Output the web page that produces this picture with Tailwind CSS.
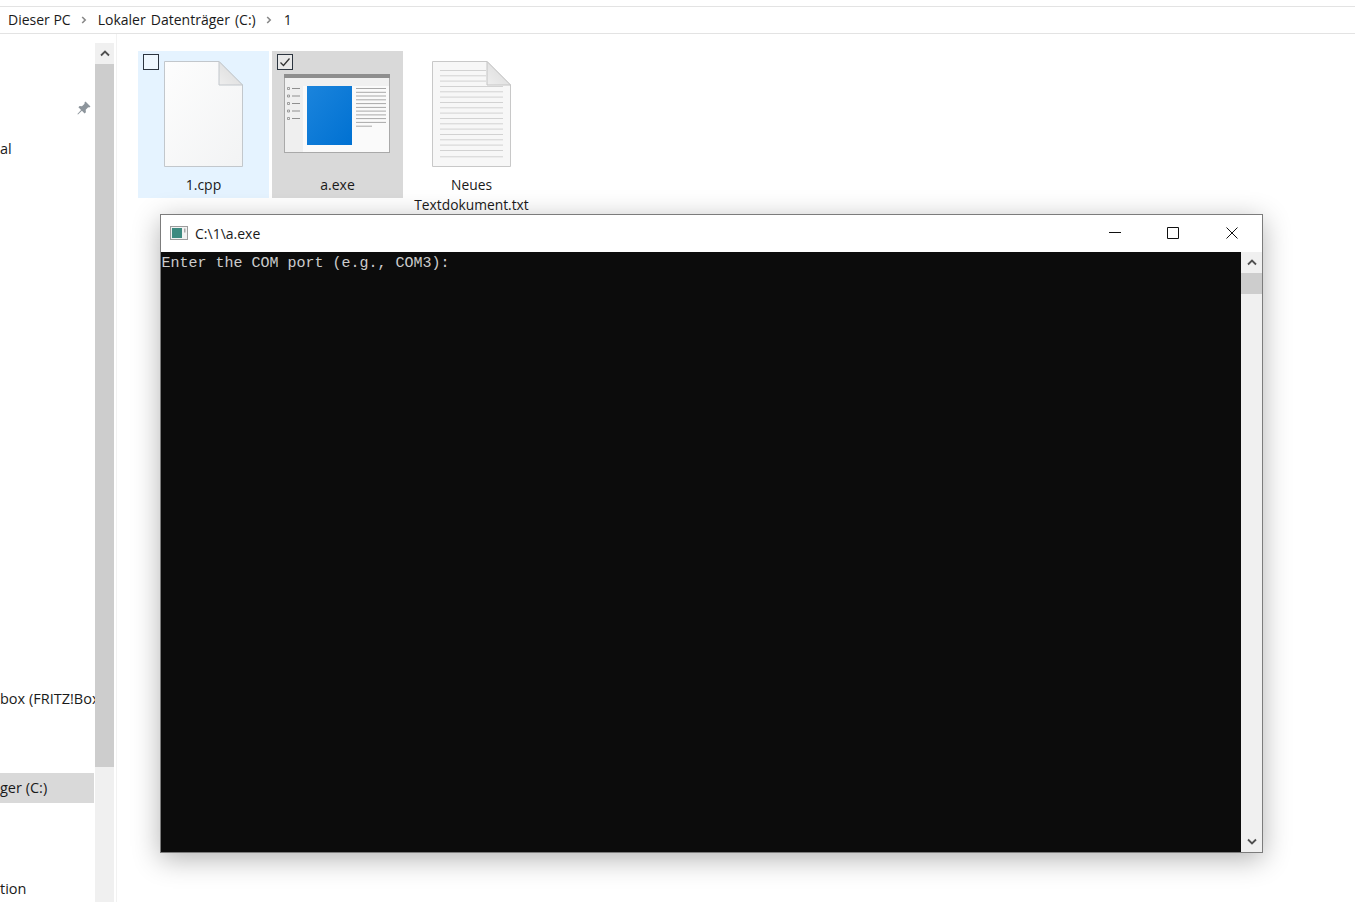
<!DOCTYPE html>
<html lang="de">
<head>
  <meta charset="UTF-8">
  <title>Explorer - a.exe</title>
  <script src="https://cdn.jsdelivr.net/npm/@tailwindcss/browser@4"></script>
</head>
<body class="bg-white h-[902px] overflow-hidden relative font-['Open_Sans',sans-serif] text-[14px] text-[#1a1a1a]">

  <!-- address bar -->
  <div class="mt-[6px] h-[28px] border-y border-[#e3e3e3] flex items-center pl-[8px] pb-[2px]">
    <span>Dieser PC</span>
    <svg class="w-[6px] h-[8px] ml-[10px] mr-[11px] mt-[2px]" viewBox="0 0 6 8" fill="none" stroke="#888" stroke-width="1.600"><path d="M1.200 1l3 3-3 3"/></svg>
    <span class="[word-spacing:1.500px]">Lokaler Datenträger (C:)</span>
    <svg class="w-[6px] h-[8px] ml-[10px] mr-[12px] mt-[2px]" viewBox="0 0 6 8" fill="none" stroke="#888" stroke-width="1.600"><path d="M1.200 1l3 3-3 3"/></svg>
    <span>1</span>
  </div>

  <div class="flex h-[868px]">
    <!-- nav pane -->
    <div class="w-[95px] shrink-0 overflow-hidden whitespace-nowrap flex flex-col text-[14.500px]">
      <div class="h-[82px] flex justify-end items-end pr-[3px] shrink-0">
        <svg class="w-[16px] h-[16px]" viewBox="0 0 16 16" fill="#8d959c"><path d="M9.5 1.500l5 5-1.300.9-1-.2-2.500 2.600.2 2.400-1.300 1.200-2.700-2.700L2 14.500l-.6-.5 3.700-4-2.700-2.700 1.200-1.300 2.400.2 2.600-2.500-.2-1z"/></svg>
      </div>
      <div class="mt-[18px] h-[30px] flex items-center shrink-0">al</div>
      <div class="mt-[520px] h-[30px] flex items-center shrink-0">box (FRITZ!Box)</div>
      <div class="mt-[59px] h-[30px] w-[94px] bg-[#d9d9d9] flex items-center shrink-0">ger (C:)</div>
      <div class="mt-[71px] h-[30px] flex items-center shrink-0">tion</div>
    </div>

    <!-- nav scrollbar -->
    <div class="w-[19px] shrink-0 mt-[9px] bg-[#f0f0f0] flex flex-col">
      <div class="h-[21px] flex items-center justify-center">
        <svg class="w-[10px] h-[7px]" viewBox="0 0 10 7" fill="none" stroke="#505050" stroke-width="1.800"><path d="M1 5.500l4-4 4 4"/></svg>
      </div>
      <div class="h-[703px] bg-[#cdcdcd]"></div>
    </div>
    <div class="w-[1px] ml-[2px] shrink-0 bg-[#f2f2f2]"></div>

    <!-- file view -->
    <div class="flex gap-[3px] pl-[21px] pt-[17px] items-start">
      <div class="relative w-[131px] h-[147px] bg-[#e5f3ff] flex flex-col items-center pt-[10px]">
        <div class="absolute left-[5px] top-[3px] w-[16px] h-[16px] border border-[#2c3540] bg-white/40"></div>
        <svg class="w-[80px] h-[107px]" viewBox="0 0 80 107">
          <defs>
            <linearGradient id="sheet" x1="0" y1="0" x2="1" y2="1"><stop offset="0" stop-color="#fdfdfd"/><stop offset="1" stop-color="#f2f3f4"/></linearGradient>
            <linearGradient id="fold" x1="0" y1="1" x2="1" y2="0"><stop offset="0" stop-color="#eeeeee"/><stop offset="1" stop-color="#d8d8d8"/></linearGradient>
          </defs>
          <path d="M.5.500H55L78.500 24V105.500H.5z" fill="url(#sheet)" stroke="#c2c7cc"/>
          <path d="M55 .500V24H78.500z" fill="url(#fold)" stroke="#c2c7cc"/>
        </svg>
        <div class="mt-[7px] leading-[20px] text-center">1.cpp</div>
      </div>

      <div class="relative w-[131px] h-[147px] bg-[#d9d9d9] pl-[12px] pt-[23px]">
        <div class="absolute left-[5px] top-[3px] w-[16px] h-[16px] border border-[#2c3540] bg-white/40 flex items-center justify-center">
          <svg class="w-[12px] h-[12px]" viewBox="0 0 12 12" fill="none" stroke="#333" stroke-width="1.300"><path d="M1.500 6.500l3 3 6-7"/></svg>
        </div>
        <svg class="w-[106px] h-[80px]" viewBox="0 0 106 80">
          <defs>
            <linearGradient id="screen" x1="0" y1="0" x2="1" y2="1"><stop offset="0" stop-color="#1b84dc"/><stop offset="1" stop-color="#0071d2"/></linearGradient>
          </defs>
          <rect x=".5" y=".5" width="105" height="78" fill="#fafafa" stroke="#a9a9a9"/>
          <rect x="0" y="0" width="106" height="4" fill="#8e8e8e"/>
          <rect x="1" y="4" width="104" height="8" fill="#f0f0f0"/>
          <rect x="1" y="12" width="18" height="66" fill="#efefef"/>
          <rect x="23" y="12" width="45" height="59" fill="url(#screen)"/>
          <path d="M3.500 13.500h2v2h-2zM3.500 21h2v2h-2zM3.500 28.500h2v2h-2zM3.500 36h2v2h-2zM3.500 43.500h2v2h-2z" fill="none" stroke="#8a8a8a" stroke-width=".8"/>
          <path d="M8 14.500h8M8 22h8M8 29.500h8M8 37h8M8 44.500h8" stroke="#8f8f8f"/>
          <path d="M72 14.500h30M72 18.300h30M72 22h30M72 25.800h30M72 29.600h30M72 33.400h30M72 37.100h30M72 40.900h30M72 44.600h30M72 48.400h30M72 52.200h16" stroke="#a8a8a8"/>
        </svg>
        <div class="absolute left-0 right-0 top-[124px] leading-[20px] text-center">a.exe</div>
      </div>

      <div class="w-[131px] flex flex-col items-center pt-[10px]">
        <svg class="w-[80px] h-[107px]" viewBox="0 0 80 107">
          <path d="M.5.500H55L78.500 24V105.500H.5z" fill="#f7f7f7" stroke="#c8c8c8"/>
          <path d="M55 .500V24H78.500z" fill="url(#fold)" stroke="#c4c4c4"/>
          <path d="M8 9.500h46M8 14.800h46M8 20.100h46M8 25.500h63M8 30.800h63M8 36.100h63M8 41.500h63M8 46.800h63M8 52.100h63M8 57.500h63M8 62.800h63M8 68.100h63M8 73.500h63M8 78.800h63M8 84.100h63M8 89.500h63M8 95.800h63" stroke="#d2d2d2"/>
        </svg>
        <div class="mt-[7px] leading-[20px] text-center text-[13.800px]">Neues<br>Textdokument.txt</div>
      </div>
    </div>
  </div>

  <!-- console window -->
  <div class="absolute left-[160px] top-[214px] w-[1103px] h-[639px] border border-[#7c7c7c] bg-white shadow-[0_6px_26px_rgba(0,0,0,0.3)] flex flex-col">
    <div class="h-[37px] shrink-0 flex items-center">
      <svg class="ml-[9px] mb-[1px] w-[18px] h-[14px]" viewBox="0 0 18 14">
        <rect x=".5" y=".5" width="17" height="13" fill="#f2f2f2" stroke="#9c9c9c"/>
        <rect x="2" y="2" width="10" height="10" fill="#3d8a80"/>
        <rect x="14" y="2.500" width="1.500" height="4" fill="#a8a8a8"/>
      </svg>
      <span class="ml-[7px] flex-1">C:\1\a.exe</span>
      <svg class="w-[12px] h-[12px] mb-[1px] mr-[46px]" viewBox="0 0 12 12" stroke="#111" fill="none"><path d="M0 5.500h12"/></svg>
      <svg class="w-[12px] h-[12px] mb-[1px] mr-[47px]" viewBox="0 0 12 12" stroke="#111" fill="none"><path d="M.5.500h11v11h-11z"/></svg>
      <svg class="w-[12px] h-[12px] mb-[1px] mr-[24px]" viewBox="0 0 12 12" stroke="#111" fill="none"><path d="M.5.500l11 11M11.500.500l-11 11"/></svg>
    </div>
    <div class="flex-1 flex min-h-0">
      <div class="flex-1 bg-[#0c0c0c] text-[#cccccc] font-['Liberation_Mono',monospace] text-[15px] leading-[20px] pl-[0.500px] pt-[2px] whitespace-pre">Enter the COM port (e.g., COM3):</div>
      <div class="w-[21px] shrink-0 bg-[#f0f0f0] flex flex-col">
        <div class="h-[21px] flex items-center justify-center">
          <svg class="w-[10px] h-[7px]" viewBox="0 0 10 7" fill="none" stroke="#505050" stroke-width="1.800"><path d="M1 5.500l4-4 4 4"/></svg>
        </div>
        <div class="h-[21px] bg-[#cdcdcd]"></div>
        <div class="flex-1"></div>
        <div class="h-[21px] flex items-center justify-center">
          <svg class="w-[10px] h-[7px]" viewBox="0 0 10 7" fill="none" stroke="#505050" stroke-width="1.800"><path d="M1 1.500l4 4 4-4"/></svg>
        </div>
      </div>
    </div>
  </div>

</body>
</html>
